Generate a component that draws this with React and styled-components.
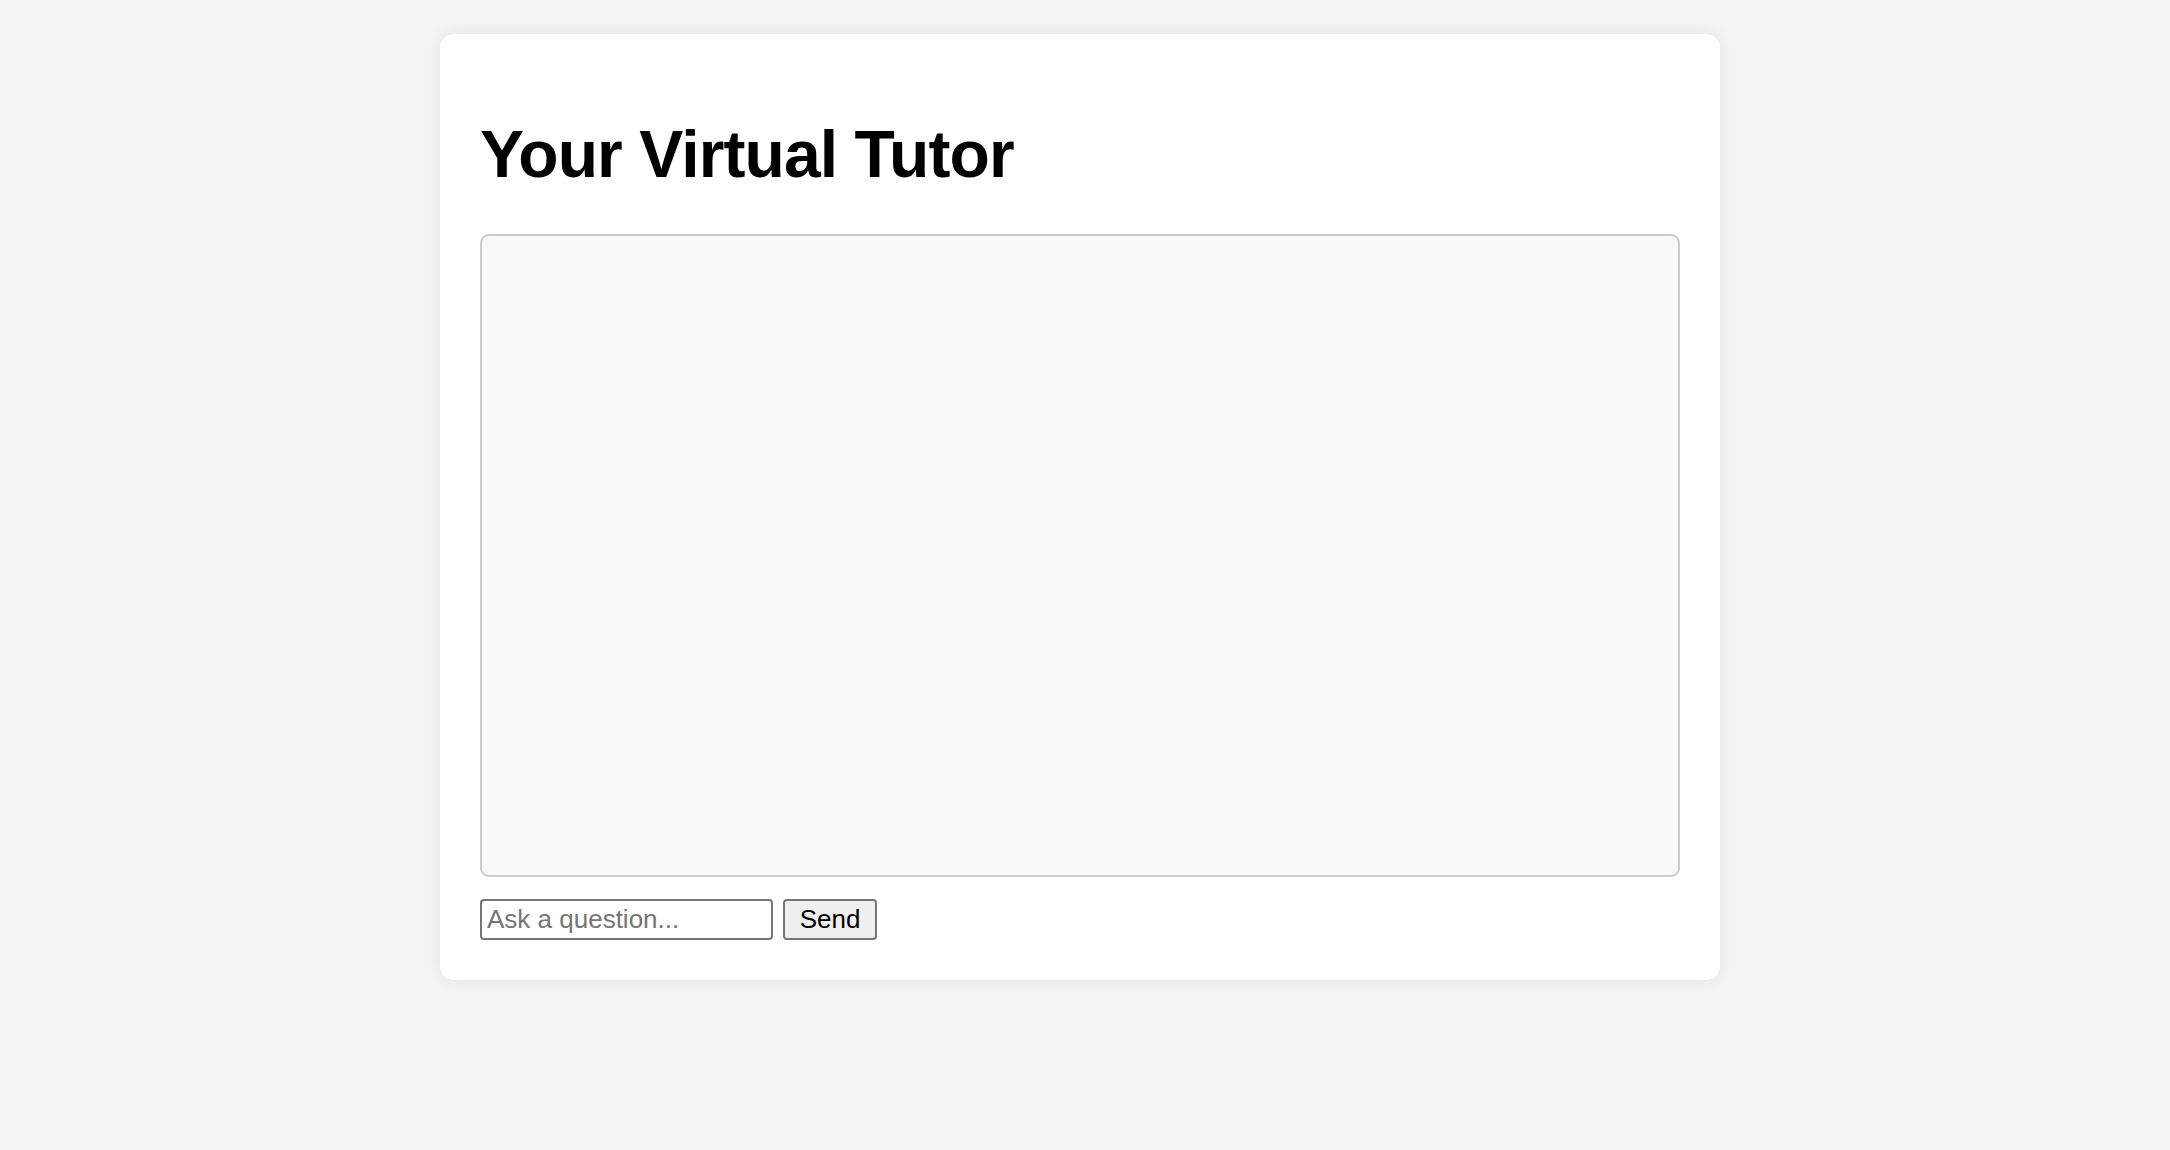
import styled, { createGlobalStyle } from "styled-components";

const GlobalStyle = createGlobalStyle`
  html, body {
    margin: 0;
    padding: 0;
    background-color: #f4f4f4;
    font-family: "Liberation Sans", Arial, sans-serif;
  }
`;

const Page = styled.div`
  min-height: 1150px;
  display: flex;
  justify-content: center;
  align-items: flex-start;
  padding: 34px 10px 0 0;
  box-sizing: border-box;
`;

const Card = styled.div`
  width: 1280px;
  box-sizing: border-box;
  padding: 40px;
  background-color: #fff;
  border-radius: 14px;
  box-shadow: 0 0 18px rgba(0, 0, 0, 0.08);
`;

const Title = styled.h1`
  margin: 42px 0 42px;
  font-size: 66px;
  font-weight: 700;
  letter-spacing: -0.9px;
  line-height: normal;
  color: #000;
`;

const ChatBox = styled.div`
  height: 643px;
  box-sizing: border-box;
  border: 2px solid #cbcbcb;
  border-radius: 9px;
  background-color: #f9f9f9;
  overflow-y: auto;
  margin-bottom: 22px;
`;

const InputRow = styled.form`
  display: flex;
  align-items: center;
  gap: 10px;
`;

const QuestionInput = styled.input`
  width: 293px;
  height: 41px;
  box-sizing: border-box;
  padding: 0 5px;
  font-family: "Liberation Sans", Arial, sans-serif;
  font-size: 26px;
  color: #000;
  border: 2px solid #767676;
  border-radius: 4px;
  background: #fff;
  outline: none;

  &::placeholder {
    color: #757575;
  }
`;

const SendButton = styled.button`
  width: 94px;
  height: 41px;
  box-sizing: border-box;
  padding: 0;
  font-family: "Liberation Sans", Arial, sans-serif;
  font-size: 26px;
  color: #000;
  background-color: #efefef;
  border: 2px solid #767676;
  border-radius: 4px;
  cursor: pointer;
`;

function App() {
  return (
    <>
      <GlobalStyle />
      <Page>
        <Card>
          <Title>Your Virtual Tutor</Title>
          <ChatBox />
          <InputRow onSubmit={(e) => e.preventDefault()}>
            <QuestionInput type="text" placeholder="Ask a question..." />
            <SendButton type="submit">Send</SendButton>
          </InputRow>
        </Card>
      </Page>
    </>
  );
}

export default App;
